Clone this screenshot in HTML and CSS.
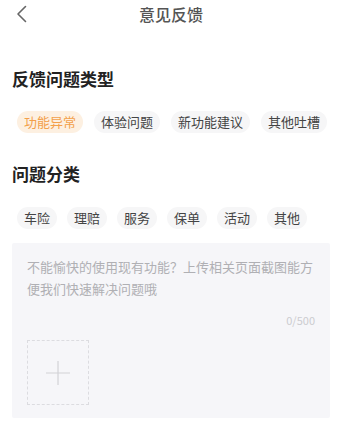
FILE: index.html
```html
<!DOCTYPE html>
<html lang="zh">
<head>
<meta charset="utf-8">
<link rel="stylesheet" href="styles.css">
</head>
<body>
<div class="nav">
  <div class="back"><svg width="11" height="18" viewBox="0 0 11 18"><path d="M9.5 1.5 L2 9 L9.5 16.5" fill="none" stroke="#666" stroke-width="1.6" stroke-linecap="round" stroke-linejoin="round"/></svg></div>
  <div class="title">意见反馈</div>
  <div></div>
</div>
<div class="section-title first">反馈问题类型</div>
<div class="chips row1">
  <span class="chip active">功能异常</span>
  <span class="chip">体验问题</span>
  <span class="chip">新功能建议</span>
  <span class="chip">其他吐槽</span>
</div>
<div class="section-title second">问题分类</div>
<div class="chips row2">
  <span class="chip">车险</span>
  <span class="chip">理赔</span>
  <span class="chip">服务</span>
  <span class="chip">保单</span>
  <span class="chip">活动</span>
  <span class="chip">其他</span>
</div>
<div class="box">
  <div class="placeholder">不能愉快的使用现有功能？上传相关页面截图能方便我们快速解决问题哦</div>
  <div class="counter">0/500</div>
  <div class="upload"><svg width="24" height="24" viewBox="0 0 24 24"><path d="M12 0V24M0 12H24" stroke="#d2d2d6" stroke-width="1.2"/></svg></div>
</div>
</body>
</html>
```
FILE: styles.css
```css
body {
  margin: 0;
  background: #fff;
  font-family: "Noto Sans CJK SC", "Noto Sans", sans-serif;
  width: 342px;
}
.nav {
  height: 28px;
  display: grid;
  grid-template-columns: 1fr auto 1fr;
  align-items: center;
}
.back {
  padding-left: 16px;
  display: flex;
  align-items: center;
  height: 28px;
}
.title {
  font-size: 16px;
  line-height: 28px;
  color: #555;
  font-weight: 500;
}
.section-title {
  font-size: 17px;
  line-height: 24px;
  font-weight: 700;
  color: #222;
  padding-left: 12px;
}
.section-title.first { margin-top: 39px; }
.section-title.second { margin-top: 29px; }
.chips {
  display: flex;
  padding-left: 17px;
  margin-top: 20px;
}
.row1 { gap: 11px; }
.row2 { gap: 10px; margin-top: 21px; }
.chip {
  height: 22px;
  line-height: 22px;
  padding: 0 7px;
  font-size: 13px;
  color: #444;
  background: #f6f6f7;
  border-radius: 11px;
}
.chip.active {
  background: #fdf0e1;
  color: #f3a04a;
}
.box {
  margin: 14px 12px 0 12px;
  background: #f6f6f9;
  padding: 13px 15px 13px 15px;
  border-radius: 2px;
}
.placeholder {
  font-size: 13px;
  line-height: 22px;
  color: #b0b0b4;
}
.counter {
  text-align: right;
  font-size: 11px;
  line-height: 14px;
  color: #ccccd0;
  margin-top: 13px;
}
.upload {
  margin-top: 13px;
  width: 60px;
  height: 63px;
  border: 1px dashed #dcdce0;
  display: flex;
  align-items: center;
  justify-content: center;
}
```
